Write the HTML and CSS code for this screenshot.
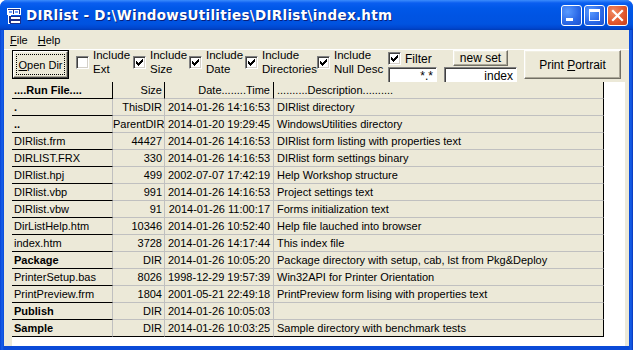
FILE: index.html
```html
<!DOCTYPE html>
<html lang="en">
<head>
  <meta charset="UTF-8">
  <title>DIRlist</title>
  <link rel="stylesheet" href="styles.css">
</head>
<body>
  <div class="window">
    <!-- title bar -->
    <div class="titlebar">
      <svg class="app-icon" width="16" height="16" viewBox="0 0 16 16" shape-rendering="crispEdges">
        <rect x="1" y="0.5" width="13" height="6" fill="#1b2f8a" stroke="#fff"/>
        <rect x="2.5" y="2" width="4" height="3" fill="#6fa0ff" stroke="#fff" stroke-width="1"/>
        <rect x="8.5" y="2" width="4" height="3" fill="#6fa0ff" stroke="#fff" stroke-width="1"/>
        <rect x="2.5" y="7.5" width="2" height="8" fill="#1b2f8a" stroke="#fff"/>
        <rect x="4.5" y="8.5" width="10" height="3" fill="#fff" stroke="#1b2f8a"/>
        <rect x="4.5" y="12.5" width="10" height="3" fill="#fff" stroke="#1b2f8a"/>
      </svg>
      <div class="title">DIRlist - D:\WindowsUtilities\DIRlist\index.htm</div>
      <div class="caption-buttons">
        <div class="cap-btn">
          <svg width="21" height="21" viewBox="0 0 21 21" shape-rendering="crispEdges"><rect x="5" y="13" width="7" height="3" fill="#fff"/></svg>
        </div>
        <div class="cap-btn">
          <svg width="21" height="21" viewBox="0 0 21 21" shape-rendering="crispEdges"><rect x="5" y="4" width="11" height="3" fill="#fff"/><rect x="5.5" y="4.5" width="10" height="11" fill="none" stroke="#fff"/></svg>
        </div>
        <div class="cap-btn close">
          <svg width="21" height="21" viewBox="0 0 21 21"><path d="M6 6l9 9M15 6l-9 9" stroke="#fff" stroke-width="2.2" stroke-linecap="square"/></svg>
        </div>
      </div>
    </div>

    <div class="client">
      <!-- menu -->
      <div class="menubar">
        <span class="menu-item"><u>F</u>ile</span>
        <span class="menu-item"><u>H</u>elp</span>
      </div>

      <!-- options -->
      <div class="toolbar">
        <div class="btn default open-btn"><span class="focus"><span><u>O</u>pen Dir</span></span></div>

        <div class="check-group w57">
          <span class="check"></span>
          <span class="check-label">Include<br>Ext</span>
        </div>
        <div class="check-group w56">
          <span class="check on"></span>
          <span class="check-label">Include<br>Size</span>
        </div>
        <div class="check-group w56">
          <span class="check on"></span>
          <span class="check-label">Include<br>Date</span>
        </div>
        <div class="check-group w72">
          <span class="check on"></span>
          <span class="check-label">Include<br>Directories</span>
        </div>
        <div class="check-group w71">
          <span class="check on"></span>
          <span class="check-label">Include<br>Null Desc</span>
        </div>

        <div class="filter-col">
          <div class="filter-row">
            <span class="check on"></span>
            <span class="filter-label">Filter</span>
          </div>
          <div class="textbox filter-box">*.*</div>
        </div>

        <div class="set-col">
          <div class="btn newset-btn">new set</div>
          <div class="textbox index-box">index</div>
        </div>

        <div class="btn print-btn"><span>Print <u>P</u>ortrait</span></div>
      </div>

      <!-- file list -->
      <div class="grid">
        <table class="files">
          <thead>
            <tr>
              <th class="c-name">....Run File....</th>
              <th class="c-size">Size</th>
              <th class="c-date">Date........Time</th>
              <th class="c-desc">..........Description..........</th>
            </tr>
          </thead>
          <tbody id="rows"></tbody>
        </table>
      </div>
    </div>
  </div>

  <script>
    const files = [
      ['.', 'ThisDIR', '2014-01-26 14:16:53', 'DIRlist directory', true],
      ['..', 'ParentDIR', '2014-01-20 19:29:45', 'WindowsUtilities directory', true],
      ['DIRlist.frm', '44427', '2014-01-26 14:16:53', 'DIRlist form listing with properties text'],
      ['DIRLIST.FRX', '330', '2014-01-26 14:16:53', 'DIRlist form settings binary'],
      ['DIRlist.hpj', '499', '2002-07-07 17:42:19', 'Help Workshop structure'],
      ['DIRlist.vbp', '991', '2014-01-26 14:16:53', 'Project settings text'],
      ['DIRlist.vbw', '91', '2014-01-26 11:00:17', 'Forms initialization text'],
      ['DirListHelp.htm', '10346', '2014-01-26 10:52:40', 'Help file lauched into browser'],
      ['index.htm', '3728', '2014-01-26 14:17:44', 'This index file'],
      ['Package', 'DIR', '2014-01-26 10:05:20', 'Package directory with setup, cab, lst from Pkg&Deploy', true],
      ['PrinterSetup.bas', '8026', '1998-12-29 19:57:39', 'Win32API for Printer Orientation'],
      ['PrintPreview.frm', '1804', '2001-05-21 22:49:18', 'PrintPreview form lising with properties text'],
      ['Publish', 'DIR', '2014-01-26 10:05:03', '', true],
      ['Sample', 'DIR', '2014-01-26 10:03:25', 'Sample directory with benchmark tests', true]
    ];

    const tbody = document.getElementById('rows');
    files.forEach(f => {
      const row = document.createElement('tr');
      const name = document.createElement('td');
      name.className = 'c-name' + (f[4] ? ' dir' : '');
      name.textContent = f[0];
      row.appendChild(name);
      ['c-size', 'c-date', 'c-desc'].forEach((cls, i) => {
        const td = document.createElement('td');
        td.className = cls;
        td.textContent = f[i + 1];
        row.appendChild(td);
      });
      tbody.appendChild(row);
    });
  </script>
</body>
</html>
```

FILE: styles.css
```css
body {
  margin: 0;
  font-family: "Liberation Sans", Arial, sans-serif;
  font-size: 11px;
  color: #000;
  background: #fff;
}
.window {
  width: 633px;
  height: 350px;
  display: flex;
  flex-direction: column;
  background: linear-gradient(90deg, #0842d4 0, #1660ea 2px, #0a4ad8 4px, #0a4ad8 629px, #1660ea 631px, #0633b8 633px);
  border-radius: 7px 7px 0 0;
  overflow: hidden;
}
.titlebar {
  height: 30px;
  flex: none;
  display: flex;
  align-items: center;
  padding: 0 5px 0 6px;
  background: linear-gradient(#3c8cfc 0, #0a5ef0 3px, #0058e8 8px, #0054e3 16px, #0053e0 24px, #0046cf 28px, #003bb6 30px);
}
.app-icon {
  flex: none;
  margin-top: 1px;
}
.title {
  flex: 1;
  margin-left: 4px;
  color: #fff;
  font-family: "DejaVu Sans", sans-serif;
  font-weight: bold;
  font-size: 13.5px;
  letter-spacing: 0.3px;
  text-shadow: 1px 1px #0a1f7a;
  white-space: nowrap;
}
.caption-buttons {
  display: flex;
  gap: 2px;
}
.cap-btn {
  width: 21px;
  height: 21px;
  box-sizing: border-box;
  border: 1px solid #fff;
  border-radius: 3px;
  background: radial-gradient(circle at 30% 30%, #5a9bff, #2a67e6 60%, #1d52cf);
  overflow: hidden;
}
.cap-btn svg {
  display: block;
  margin: -1px;
}
.cap-btn.close {
  background: radial-gradient(circle at 30% 30%, #f08a63, #e0552b 60%, #c8401d);
}
.client {
  flex: 1;
  margin: 0 4px 4px;
  background: #ece9d8;
  display: flex;
  flex-direction: column;
  overflow: hidden;
}
.menubar {
  height: 19px;
  flex: none;
  display: flex;
  align-items: center;
  padding-left: 1px;
  border-bottom: 1px solid #fff;
}
.menu-item {
  padding: 0 5px;
}
.toolbar {
  height: 32px;
  flex: none;
  display: flex;
  align-items: flex-start;
  padding-left: 8px;
}
.btn {
  box-sizing: border-box;
  display: flex;
  align-items: center;
  justify-content: center;
  background: #ece9d8;
  border: 1px solid;
  border-color: #fff #716f64 #716f64 #fff;
  box-shadow: inset -1px -1px #aca899, inset 1px 1px #f1efe2;
  white-space: nowrap;
}
.btn.default {
  outline: 1px solid #000;
  outline-offset: 0;
  border-color: #fff #404040 #404040 #fff;
}
.open-btn {
  width: 55px;
  height: 27px;
  margin: 1px 8px 0 1px;
}
.focus {
  box-sizing: border-box;
  width: 49px;
  height: 21px;
  display: flex;
  align-items: center;
  justify-content: center;
  border: 1px dotted #000;
}
.check-group {
  display: flex;
  align-items: flex-start;
  padding-top: 6px;
}
.w57 { width: 57px; }
.w56 { width: 56px; }
.w72 { width: 72px; }
.w71 { width: 71px; }
.check {
  flex: none;
  width: 13px;
  height: 13px;
  box-sizing: border-box;
  background: #fff;
  border: 1px solid;
  border-color: #808080 #fff #fff #808080;
  box-shadow: inset 1px 1px #404040, inset -1px -1px #d4d0c8;
  position: relative;
}
.check.on::after {
  content: "";
  position: absolute;
  left: 1px;
  top: 1px;
  width: 9px;
  height: 9px;
  background: url("data:image/svg+xml,%3Csvg xmlns='http://www.w3.org/2000/svg' width='9' height='9' viewBox='2 2 9 9' shape-rendering='crispEdges'%3E%3Cpath d='M3 5h1v3H3zM4 6h1v3H4zM5 7h1v3H5zM6 6h1v3H6zM7 5h1v3H7zM8 4h1v3H8zM9 3h1v3H9z' fill='%23000'/%3E%3C/svg%3E");
}
.check-label {
  margin-left: 4px;
  margin-top: -8px;
  line-height: 14px;
  font-size: 11.5px;
}
.filter-col {
  width: 56px;
  padding-top: 2px;
}
.filter-row {
  display: flex;
  align-items: center;
  height: 13px;
}
.filter-label {
  margin-left: 4px;
  font-size: 12px;
}
.textbox {
  box-sizing: border-box;
  height: 16px;
  margin-top: 2px;
  background: #fff;
  border-top: 1px solid #808080;
  border-left: 1px solid #808080;
  border-right: 1px solid #fff;
  box-shadow: inset 1px 1px #404040;
  text-align: right;
  padding: 1px 3px 0 0;
  line-height: 14px;
}
.filter-box {
  width: 49px;
  font-size: 12px;
}
.set-col {
  width: 80px;
}
.newset-btn {
  width: 55px;
  height: 16px;
  margin-left: 9px;
  font-size: 12px;
}
.index-box {
  width: 73px;
  margin-top: 1px;
  font-size: 12px;
}
.print-btn {
  width: 97px;
  height: 29px;
  font-size: 12px;
}
.grid {
  flex: 1;
  margin: 0 4px 0 8px;
  background: #fff;
  overflow: hidden;
}
.files {
  table-layout: fixed;
  border-collapse: separate;
  border-spacing: 0;
  width: 592px;
}
.files th,
.files td {
  box-sizing: border-box;
  height: 17px;
  padding: 0 3px;
  line-height: 16px;
  background: #ece9d8;
  border-right: 1px solid #c0c0c0;
  border-bottom: 1px solid #c0c0c0;
  white-space: nowrap;
  overflow: hidden;
  font-weight: normal;
}
.files th {
  border-right-color: #000;
}
.files .c-name {
  width: 101px;
  text-align: left;
  padding-left: 2px;
  border-bottom-color: #000;
}
.files th.c-name,
.files td.dir {
  font-weight: bold;
}
.files .c-size {
  width: 52px;
  text-align: right;
  padding: 0 2px 0 0;
}
.files .c-date {
  width: 109px;
  text-align: right;
}
.files .c-desc {
  width: 330px;
  text-align: left;
  border-right-color: #000;
}
.files tbody tr:last-child td {
  border-bottom-color: #000;
}
```
